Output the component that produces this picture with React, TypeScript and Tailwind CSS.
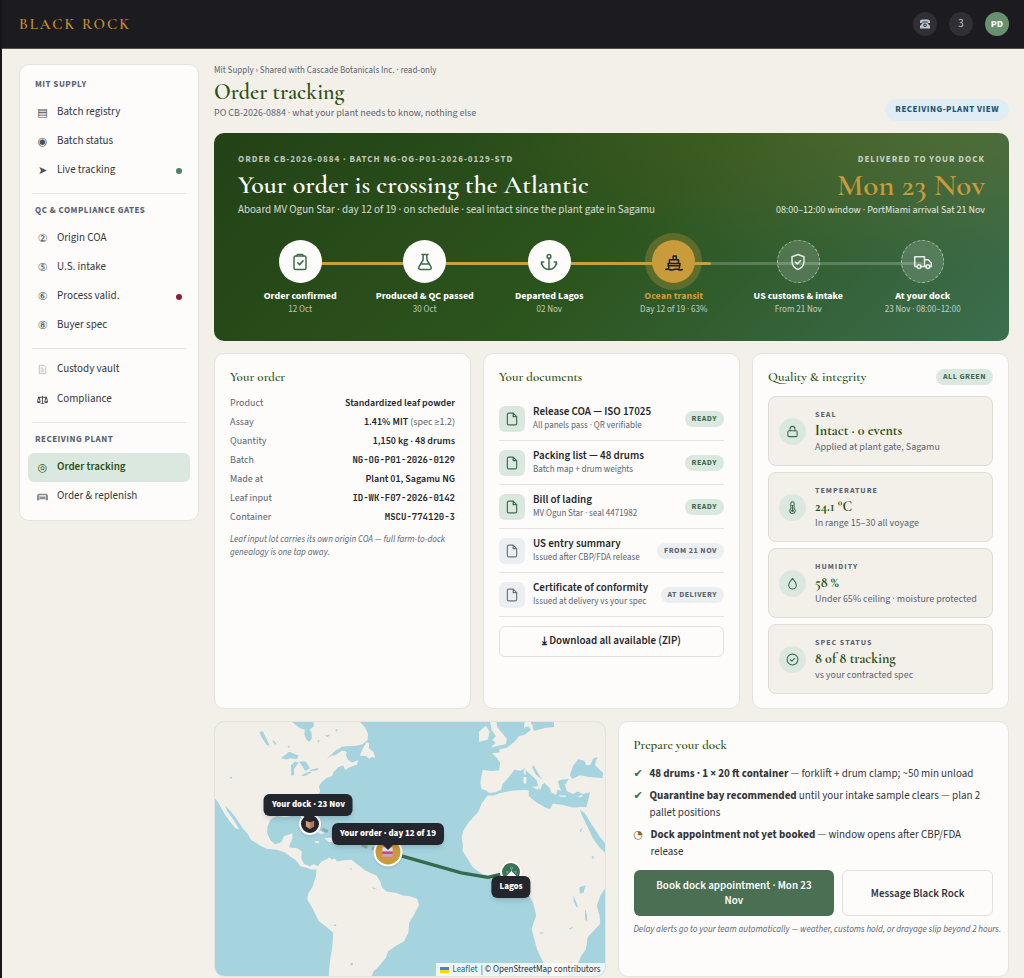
import React from "react";
import clsx from "clsx";


const SERIF = "font-['Cormorant_Garamond','Liberation_Serif',serif]";
const MONO = "font-['JetBrains_Mono','DejaVu_Sans_Mono',monospace]";
const SYMBOLS = "font-['DejaVu_Sans',sans-serif]";

interface INavItem {
    icon: React.ReactNode,
    label: string,
    dot?: string,
    active?: boolean,
    tall?: boolean,
}

interface INavGroup {
    title?: string,
    items: Array<INavItem>,
}

const vaultIcon = (
    <svg viewBox="0 0 12 12" className="size-[11px] text-[#b9bcc0]" fill="none" stroke="currentColor">
        <path d="M2.500 1.500h5l2 2v7h-7zM4 4.500h3M4 6.500h4M4 8.500h4" />
    </svg>
);

const scalesIcon = (
    <svg viewBox="0 0 12 12" className="size-[11px] text-[#4b4f55]" fill="currentColor">
        <path d="M1 3h4.500V2h1v1H11v1l1 4.500q0 1.500-2 1.500t-2-1.500L9 4H6.500v6H8v1H4v-1h1.500V4H3l1 4.500Q4 10 2 10T0 8.500L1 4zM2 5L1 8h2zM10 5L9 8h2z" />
    </svg>
);

const carIcon = (
    <svg viewBox="0 0 12 12" className="size-[11px] text-[#8a8d92]" fill="currentColor">
        <path fillRule="evenodd" d="M2 3h8q1.500 0 2 2.500V10h-2.500V9h-7v1H0V5.500Q.5 3 2 3zM2.500 4.500L2 6h8l-.5-1.500zM2 7v1h1.500V7zM8.500 7v1H10V7z" />
    </svg>
);

const navGroups: Array<INavGroup> = [
    {
        title: 'MIT SUPPLY',
        items: [
            { icon: '▤', label: 'Batch registry' },
            { icon: '◉', label: 'Batch status' },
            { icon: '➤', label: 'Live tracking', dot: 'bg-[#4f8060]' },
        ],
    },
    {
        title: 'QC & COMPLIANCE GATES',
        items: [
            { icon: '②', label: 'Origin COA' },
            { icon: '⑤', label: 'U.S. intake' },
            { icon: '⑥', label: 'Process valid.', dot: 'bg-[#8b1e3a]' },
            { icon: '⑧', label: 'Buyer spec' },
        ],
    },
    {
        items: [
            { icon: vaultIcon, label: 'Custody vault', tall: true },
            { icon: scalesIcon, label: 'Compliance', tall: true },
        ],
    },
    {
        title: 'RECEIVING PLANT',
        items: [
            { icon: '◎', label: 'Order tracking', active: true },
            { icon: carIcon, label: 'Order & replenish' },
        ],
    },
];

const iconPaths = {
    clipboard: <><rect x="4" y="4" width="16" height="18" rx="2" /><path d="M8 4V3q0-1 1-1h6q1 0 1 1v1M9 13l2.500 2.500 4.500-5" /></>,
    flask: <path d="M8 2h8M9.500 2v7L4 18.500Q3 22 6 22h12q3 0 2-3.500L14.500 9V2M7 14.500h10" />,
    anchor: <><circle cx="12" cy="4.500" r="2.500" /><path d="M12 7v15M2 15v-3h3M2 12.500C3 18.500 7 22 12 22s9-3.500 10-9.500M22 15v-3h-3" /></>,
    ship: <path d="M5 20l-1-6h16l-1 6M6 14V9h12v5M11 9V4h4v5M4 17h16M1 22q2.500-1.500 5 0t6 0 6 0 5 0" />,
    shield: <path d="M12 2l8 3v6c0 5.500-3.500 9-8 11-4.500-2-8-5.500-8-11V5zM8.500 12l2.500 2.500 4.500-4.500" />,
    truck: <><path d="M4 18H1V5h13v13H9.500M14 9h5l4 4.500V18h-2M14 18h2" /><circle cx="6.750" cy="18" r="2.500" /><circle cx="18.500" cy="18" r="2.500" /></>,
    file: <path d="M14 2H6.500Q4 2 4 4.500v15Q4 22 6.500 22h11q2.500 0 2.500-2.500V8zM14 2v6h6" />,
    lock: <><rect x="3.500" y="10.500" width="17" height="11" rx="2" /><path d="M7.500 10.500V7a4.500 4.500 0 0 1 9 0v3.500" /></>,
    thermometer: <><path d="M9 14V4.500a3 3 0 0 1 6 0V14a5 5 0 1 1-6 0z" /><path d="M12 8v10" /><circle cx="12" cy="18" r="1.500" /></>,
    drop: <path d="M12 2.500C8.500 6.500 5 10.500 5 15a7 7 0 0 0 14 0c0-4.500-3.500-8.500-7-12.500z" />,
    check: <><circle cx="12" cy="12" r="10" /><path d="M8 12.500l2.800 2.500 5-5" /></>,
};

type IconName = keyof typeof iconPaths;

const steps: Array<{ icon: IconName, title: string, when: string, state: 'done' | 'now' | 'next' }> = [
    { icon: 'clipboard', title: 'Order confirmed', when: '12 Oct', state: 'done' },
    { icon: 'flask', title: 'Produced & QC passed', when: '30 Oct', state: 'done' },
    { icon: 'anchor', title: 'Departed Lagos', when: '02 Nov', state: 'done' },
    { icon: 'ship', title: 'Ocean transit', when: 'Day 12 of 19 · 63%', state: 'now' },
    { icon: 'shield', title: 'US customs & intake', when: 'From 21 Nov', state: 'next' },
    { icon: 'truck', title: 'At your dock', when: '23 Nov · 08:00–12:00', state: 'next' },
];

const orderRows: Array<{ label: string, value: string, note?: string, mono?: boolean }> = [
    { label: 'Product', value: 'Standardized leaf powder' },
    { label: 'Assay', value: '1.41% MIT', note: '(spec ≥1.2)' },
    { label: 'Quantity', value: '1,150 kg · 48 drums' },
    { label: 'Batch', value: 'NG-OG-P01-2026-0129', mono: true },
    { label: 'Made at', value: 'Plant 01, Sagamu NG' },
    { label: 'Leaf input', value: 'ID-WK-F07-2026-0142', mono: true },
    { label: 'Container', value: 'MSCU-774120-3', mono: true },
];

const documents = [
    { title: 'Release COA — ISO 17025', sub: 'All panels pass · QR verifiable', status: 'READY', ready: true },
    { title: 'Packing list — 48 drums', sub: 'Batch map + drum weights', status: 'READY', ready: true },
    { title: 'Bill of lading', sub: 'MV Ogun Star · seal 4471982', status: 'READY', ready: true },
    { title: 'US entry summary', sub: 'Issued after CBP/FDA release', status: 'FROM 21 NOV', ready: false },
    { title: 'Certificate of conformity', sub: 'Issued at delivery vs your spec', status: 'AT DELIVERY', ready: false },
];

const readings: Array<{ icon: IconName, label: string, value: string, sub: string }> = [
    { icon: 'lock', label: 'SEAL', value: 'Intact · 0 events', sub: 'Applied at plant gate, Sagamu' },
    { icon: 'thermometer', label: 'TEMPERATURE', value: '24.1 °C', sub: 'In range 15–30 all voyage' },
    { icon: 'drop', label: 'HUMIDITY', value: '58 %', sub: 'Under 65% ceiling · moisture protected' },
    { icon: 'check', label: 'SPEC STATUS', value: '8 of 8 tracking', sub: 'vs your contracted spec' },
];

function Icon({ name, className }: { name: IconName, className?: string }) {
    return (
        <svg viewBox="0 0 24 24" className={clsx("shrink-0", className)} fill="none" stroke="currentColor" strokeWidth="2" strokeLinecap="round" strokeLinejoin="round" aria-hidden="true">
            {iconPaths[name]}
        </svg>
    )
}

function Card({ className, children }: { className?: string, children: React.ReactNode }) {
    return (
        <section className={clsx("bg-[#fdfcfa] border border-[#e3e3e0] rounded-[10px] px-[15px] pt-[15px] pb-[14px]", className)}>
            {children}
        </section>
    )
}

function CardTitle({ children }: { children: React.ReactNode }) {
    return <h2 className={clsx(SERIF, "text-[13px] leading-4 font-semibold text-[#2d5016]")}>{children}</h2>
}

function Badge({ ready, children }: { ready: boolean, children: React.ReactNode }) {
    return (
        <span className={clsx("shrink-0 rounded-full px-[7px] h-4 text-[8px] leading-4 font-bold tracking-[0.5px]", ready ? "bg-[#dbe8df] text-[#3f6b4d]" : "bg-[#eceff2] text-[#5b6472]")}>
            {children}
        </span>
    )
}

function Header() {
    return (
        <header className="flex items-center justify-between h-[49px] pl-[17px] pr-[15px] bg-[#1c1b20] border-b border-[#55504e]">
            <a href="#" className={clsx(SERIF, "text-[15px] leading-5 font-semibold tracking-[2px] text-[#c08f35]")}>BLACK ROCK</a>
            <div className="flex gap-3">
                <button aria-label="Contact" className="size-6 rounded-full bg-[#302f34] text-[#bfc6d2] flex items-center justify-center">
                    <svg viewBox="0 0 12 12" className="size-3" fill="currentColor">
                        <path d="M1 5V3.500Q1 1.500 3.500 1.500h5Q11 1.500 11 3.500V5H8.500V3.500h-5V5z" />
                        <path fillRule="evenodd" d="M4 4.500h4l3 3.500v2.500H1V8zM6 5.500a1.800 1.800 0 1 0 0 3.600 1.800 1.800 0 0 0 0-3.600zM6 6.500a.8.8 0 1 1 0 1.600.8.8 0 0 1 0-1.600z" />
                    </svg>
                </button>
                <button aria-label="Notifications" className="size-6 rounded-full bg-[#302f34] text-[#bfc6d2] text-[11px]">3</button>
                <button aria-label="Account" className="size-6 rounded-full bg-[#67906f] text-white text-[10px] font-bold">PD</button>
            </div>
        </header>
    )
}

function Sidebar() {
    return (
        <nav className="w-[180px] shrink-0 bg-[#fdfcfa] border border-[#e3e3e0] rounded-[10px] px-2 pt-2 pb-[9px]">
            {navGroups.map((group, i) => (
                <div key={i} className={clsx(i > 0 && "mt-2")}>
                    {i > 0 && <hr className="mx-1 mb-[5px] border-[#e3e3e0]" />}
                    {group.title && <h3 className="px-[7px] h-[25px] leading-[24px] text-[9px] font-bold tracking-[0.5px] text-[#5b6472]">{group.title}</h3>}
                    <ul>
                        {group.items.map((item) => (
                            <li key={item.label}>
                                <a
                                    href="#"
                                    className={clsx(
                                        "flex items-center gap-2 px-2 rounded-md text-[11px]",
                                        item.tall ? "h-[30px]" : "h-[29px]",
                                        item.active ? "bg-[#dbe8df] text-[#2d5016] font-semibold" : "text-[#33363b]"
                                    )}
                                >
                                    <span className={clsx(SYMBOLS, "w-[13px] flex justify-center text-[11px] leading-3 font-normal", item.active ? "text-[#2d5016]" : "text-[#4b4f55]")}>{item.icon}</span>
                                    <span className="flex-1">{item.label}</span>
                                    {item.dot && <span className={clsx("size-[6px] rounded-full", item.dot)} />}
                                </a>
                            </li>
                        ))}
                    </ul>
                </div>
            ))}
        </nav>
    )
}

function Hero() {
    return (
        <section className="h-52 rounded-[10px] px-6 pt-[21px] text-white bg-[radial-gradient(ellipse_at_90%_-10%,rgba(201,155,58,0.2),transparent_48%),linear-gradient(135deg,#234216_0%,#2c541d_50%,#3c6e4f_100%)]">
            <div className="flex justify-between">
                <div>
                    <p className="text-[9px] leading-3 font-bold tracking-[1px] text-white/70">ORDER CB-2026-0884 · BATCH NG-OG-P01-2026-0129-STD</p>
                    <h2 className={clsx(SERIF, "mt-[3px] text-[26px] leading-8 font-semibold")}>Your order is crossing the Atlantic</h2>
                    <p className="mt-px text-[11px] leading-4 text-white/80">Aboard MV Ogun Star · day 12 of 19 · on schedule · seal intact since the plant gate in Sagamu</p>
                </div>
                <div className="text-right">
                    <p className="text-[9px] leading-3 font-bold tracking-[1px] text-white/70">DELIVERED TO YOUR DOCK</p>
                    <p className={clsx(SERIF, "mt-[3px] text-[31px] leading-8 font-semibold text-[#c99b3a]")}>Mon 23 Nov</p>
                    <p className="mt-px text-[10px] leading-4 text-white/85">08:00–12:00 window · PortMiami arrival Sat 21 Nov</p>
                </div>
            </div>
            <div className="relative mt-[22px]">
                <div className="absolute top-[22px] left-[8.33%] right-[8.33%] h-[3px] rounded-full bg-white/20">
                    <div className="h-full w-[66%] rounded-full bg-[#c4a040]" />
                </div>
                <ol className="relative grid grid-cols-6 text-center">
                    {steps.map((step) => (
                        <li key={step.title} className="flex flex-col items-center">
                            <span
                                className={clsx(
                                    "size-[43px] rounded-full flex items-center justify-center",
                                    step.state === 'done' && "bg-[#fdfcfa] text-[#3f6b4d]",
                                    step.state === 'now' && "bg-[#c99b3a] text-[#1c1b20] ring-[7px] ring-[#c99b3a]/30",
                                    step.state === 'next' && "bg-white/15 text-white/85 border border-dashed border-white/50"
                                )}
                            >
                                <Icon name={step.icon} className="size-[18px]" />
                            </span>
                            <span className={clsx("mt-[6px] text-[10px] leading-[14px] font-bold", step.state === 'now' && "text-[#c99b3a]")}>{step.title}</span>
                            <span className="text-[9px] leading-[14px] text-white/70">{step.when}</span>
                        </li>
                    ))}
                </ol>
            </div>
        </section>
    )
}

function OrderCard() {
    return (
        <Card>
            <CardTitle>Your order</CardTitle>
            <dl className="mt-[9px] text-[10px] leading-[19px]">
                {orderRows.map((row) => (
                    <div key={row.label} className="flex justify-between">
                        <dt className="text-[#5b6472]">{row.label}</dt>
                        <dd className={clsx("text-[#24272c]", row.mono ? [MONO, "text-[9px] font-bold"] : "font-semibold")}>
                            {row.value}
                            {row.note && <span className="font-normal text-[#5b6472]"> {row.note}</span>}
                        </dd>
                    </div>
                ))}
            </dl>
            <p className="mt-[6px] text-[9px] leading-[13px] italic text-[#5b6472]">Leaf input lot carries its own origin COA — full farm-to-dock genealogy is one tap away.</p>
        </Card>
    )
}

function DocumentsCard() {
    return (
        <Card>
            <CardTitle>Your documents</CardTitle>
            <ul className="mt-3">
                {documents.map((doc) => (
                    <li key={doc.title} className="flex items-center h-11 border-b border-[#e3e3e0]">
                        <span className={clsx("size-[26px] shrink-0 rounded-md flex items-center justify-center", doc.ready ? "bg-[#dbe8df] text-[#3f6b4d]" : "bg-[#eceff2] text-[#6b7280]")}>
                            <Icon name="file" className="size-[14px]" />
                        </span>
                        <div className="ml-2 flex-1 whitespace-nowrap">
                            <p className="text-[11px] leading-[15px] font-semibold text-[#24272c]">{doc.title}</p>
                            <p className="text-[9px] leading-[14px] text-[#5b6472]">{doc.sub}</p>
                        </div>
                        <Badge ready={doc.ready}>{doc.status}</Badge>
                    </li>
                ))}
            </ul>
            <button className="mt-[9px] w-full h-[31px] rounded-md border border-[#e0e0de] text-[11px] font-semibold text-[#24272c]">⤓ Download all available (ZIP)</button>
        </Card>
    )
}

function QualityCard() {
    return (
        <Card>
            <div className="flex items-center justify-between">
                <CardTitle>Quality &amp; integrity</CardTitle>
                <Badge ready={true}>ALL GREEN</Badge>
            </div>
            <ul className="mt-[11px] flex flex-col gap-[6px]">
                {readings.map((r) => (
                    <li key={r.label} className="flex items-center gap-[9px] h-[70px] px-[10px] rounded-lg bg-[#f3f0ea] border border-[#dedcd5]">
                        <span className="size-[27px] shrink-0 rounded-full bg-[#dbe8df] text-[#3f6b4d] flex items-center justify-center">
                            <Icon name={r.icon} className="size-[13px]" />
                        </span>
                        <div className="whitespace-nowrap">
                            <p className="text-[8px] leading-4 font-bold tracking-[1px] text-[#5b6472]">{r.label}</p>
                            <p className={clsx(SERIF, "text-[14px] leading-4 font-bold text-[#2d5016]")}>{r.value}</p>
                            <p className="text-[10px] leading-4 text-[#5b6472]">{r.sub}</p>
                        </div>
                    </li>
                ))}
            </ul>
        </Card>
    )
}

// Atlantic coastlines, 3 units to a pixel
function WorldMap() {
    return (
        <svg viewBox="15 18 1170 765" preserveAspectRatio="xMidYMid slice" className="absolute inset-0 size-full" aria-hidden="true">
            <rect x="-500" y="-500" width="2500" height="2000" fill="#a5d3de" />
            <g fill="#f2efe9">
                <path d="M10 10H245V18L255 26 270 38 285 42 283 54 290 72 298 79 306 68 305 50 299 42 312 32 310 10H450V18L465 35 475 55 473 72 458 86 440 90 410 92 395 98 380 102 365 116 350 130 368 118 380 112 398 104 411 108 408 120 415 133 428 141 445 133 442 147 420 155 406 163 400 150 385 155 371 170 366 181 350 188 335 200 327 213 331 228 322 242 302 257 291 270 287 288 293 305 288 322 280 318 272 302 260 298 240 302 225 305 200 301 182 312 172 335 172 355 182 375 195 386 214 380 222 362 247 354 248 368 240 385 238 396 262 398 276 408 274 430 282 445 300 452 312 446 324 452 335 437 350 432 358 425 365 432 375 430 382 437 405 434 425 433 440 445 468 466 500 480 512 500 516 515 530 528 560 533 580 540 598 542 622 550 628 568 613 598 598 622 596 652 582 678 560 690 535 708 528 728 508 752 490 770 480 800H355L360 740 368 690 370 652 350 635 326 617 310 582 292 552 295 535 309 512 318 482 320 462 305 462 290 457 272 452 258 434 240 422 225 411 200 403 170 400 150 390 122 372 115 358 98 338 80 310 62 287 45 270 52 287 66 307 78 325 88 342 76 338 60 318 47 300 36 282 22 256 10 245Z" />
                <path d="M450 120L458 100 471 78 478 84 477 98 492 110 496 127 486 124 478 130 470 122ZM268 347L285 338 305 341 330 345 345 354 332 355 308 345 285 344ZM343 368L362 366 378 378 358 380ZM314 377L328 377 326 383 316 382ZM386 378H396V382H386Z" />
                <g transform="translate(570 0)">
                    <path d="M268 232L259 224 246 221 242 202 249 163 275 166 298 165 302 142 290 125 277 113 300 111 300 101 322 96 343 80 358 62 375 57 394 42 386 32 373 36 376 10H389L397 28 403 46 425 40 440 36 464 34 462 10H700V500L616 520 603 540 592 570 600 600 603 624 565 665 560 700 545 722 535 745 510 770 480 790H455L436 752 412 702 396 640 410 600 400 560 382 530 372 502 350 492 340 478 300 472 265 480 246 475 220 456 205 432 188 405 190 390 186 365 191 345 207 320 235 290 246 264 264 240 282 240 302 232 340 225 376 223 387 224 388 242 410 260 440 277 452 280 460 264 490 268 520 276 545 274 560 275 566 255 571 230 550 235 535 228 520 235 502 226 496 208 508 190 488 192 475 196 480 215 486 226 474 222 469 238 456 231 449 215 435 203 415 172 402 148 398 156 410 178 438 200 428 207 421 225 410 192 388 173 375 158 362 166 345 162 337 172 322 192 308 207 305 222 288 230Z" />
                    <path d="M270 10H290V18L293 35 310 55 322 70 318 86 292 91 272 96 288 82 278 72 289 62 276 44ZM238 48L258 30 270 48 264 72 238 78ZM373 160L379 162 378 178 372 174ZM371 185L381 184 380 204 372 204ZM397 214L420 211 415 223ZM478 239L500 240 498 244 480 243ZM534 243L550 237 545 246ZM388 30L400 28 396 40Z" />
                </g>
            </g>
            <g fill="#a5d3de">
                <path d="M213 128L238 108 266 120 262 130 240 128 230 132ZM244 180L243 150 255 138 266 141 253 160 252 180ZM268 138L288 138 300 158 286 166 276 150ZM272 180L298 168 306 170 285 181ZM300 163L325 157 324 164 303 166ZM148 50L158 46 170 70 180 90 170 88 156 66ZM185 72L200 82 196 88ZM365 120L395 93 430 92 448 100 440 128 425 120 412 108 398 104 375 120Z" />
                <g transform="translate(570 0)">
                    <path d="M511 178L521 150 536 131 555 136 560 149 572 148 582 128 594 124 586 148 611 172 609 187 570 184 540 179 518 190ZM541 282L556 293 575 325 600 362 630 400V425L600 396 580 368 562 330 546 296ZM540 515L558 510 552 532 541 534ZM522 540L528 555 536 576 530 574 522 556ZM556 580L562 596 563 618 557 612Z" />
                    <path d="M576 424L584 420 580 432ZM540 345L550 335 544 350ZM420 651H432V654H420ZM508 640L522 632 514 642Z" />
                    <path d="M605 538L640 505V800H540L560 700 565 667 603 626Z" />
                </g>
                <path d="M345 60L362 56 354 64ZM375 42L384 40 380 48ZM322 75L330 73 326 82ZM420 458H426V463H420ZM422 743H429V750H422ZM372 627H379V632H372ZM232 92L240 90 237 98ZM60 184H66V189H60ZM485 515L505 522 490 520Z" />
            </g>
            <path d="M535 410L475 396 400 370 300 323" fill="none" stroke="#8a958f" strokeWidth="9" strokeDasharray="18 14" opacity=".7" />
            <path d="M535 410L755 472 835 486 907 469" fill="none" stroke="#356b4b" strokeWidth="10" strokeLinejoin="round" />
        </svg>
    )
}

function MapCard() {
    return (
        <section className="relative h-64 overflow-hidden rounded-[10px] border border-[#e3e3e0]">
            <WorldMap />
            <span className="absolute left-[24.4%] top-[40%] -translate-1/2 size-[22px] rounded-full border-2 border-white bg-[#24262d] shadow flex items-center justify-center">
                <svg viewBox="0 0 12 12" className="size-[10px]"><path d="M1 2l5 2v8L1 9z" fill="#d09a78" /><path d="M11 2L6 4v8l5-3z" fill="#b87858" /></svg>
            </span>
            <span className="absolute left-[44.4%] top-[51%] -translate-1/2 size-[29px] rounded-full border-2 border-white bg-[#c99b3a] shadow flex items-center justify-center">
                <svg viewBox="0 0 14 14" className="size-3"><path d="M1 2h12v5H1z" fill="#e8dcee" /><path d="M1 7h12v3H1z" fill="#e0417c" /><path d="M1 10h12v3H1z" fill="#c7a2c9" /></svg>
            </span>
            <span className="absolute left-[76%] top-[59%] -translate-1/2 size-[22px] rounded-full border-2 border-white bg-[#41704f] shadow flex items-center justify-center">
                <Icon name="anchor" className="size-[11px] text-[#35b5d0]" />
            </span>
            <span className="absolute left-[24%] top-[32.5%] -translate-1/2 h-[22px] px-2 rounded-md bg-[#24262d] text-white text-[9px] leading-[22px] font-extrabold whitespace-nowrap shadow-md after:absolute after:top-full after:left-1/2 after:-translate-x-1/2 after:border-[5px] after:border-transparent after:border-t-[#24262d]">Your dock · 23 Nov</span>
            <span className="absolute left-[44.4%] top-[44%] -translate-1/2 h-[22px] px-2 rounded-md bg-[#24262d] text-white text-[9px] leading-[22px] font-extrabold whitespace-nowrap shadow-md after:absolute after:top-full after:left-1/2 after:-translate-x-1/2 after:border-[5px] after:border-transparent after:border-t-[#24262d]">Your order · day 12 of 19</span>
            <span className="absolute left-[76%] top-[65%] -translate-1/2 h-[22px] px-2 rounded-md bg-[#24262d] text-white text-[9px] leading-[22px] font-extrabold whitespace-nowrap shadow-md after:absolute after:bottom-full after:left-1/2 after:-translate-x-1/2 after:border-[5px] after:border-transparent after:border-b-white">Lagos</span>
            <p className="absolute right-0 bottom-0 flex items-center gap-[3px] h-[13px] px-1 bg-white/80 text-[9px] leading-[13px] text-[#333333] whitespace-nowrap">
                <svg viewBox="0 0 9 6" className="w-[9px] h-[6px]"><path d="M0 0h9v3H0z" fill="#4c7be1" /><path d="M0 3h9v3H0z" fill="#ffd500" /></svg>
                <a href="#" className="text-[#0078a8]">Leaflet</a>
                <span>| © OpenStreetMap contributors</span>
            </p>
        </section>
    )
}

function DockCard() {
    return (
        <Card>
            <CardTitle>Prepare your dock</CardTitle>
            <ul className="mt-3 flex flex-col gap-[5px] text-[11px] leading-[17px] text-[#33363b]">
                <li className="flex gap-[7px]">
                    <span className={clsx(SYMBOLS, "w-[9px] text-[11px] text-[#3f6b4d]")}>✔</span>
                    <p className="flex-1"><b>48 drums · 1 × 20 ft container</b> — forklift + drum clamp; ~50 min unload</p>
                </li>
                <li className="flex gap-[7px]">
                    <span className={clsx(SYMBOLS, "w-[9px] text-[11px] text-[#3f6b4d]")}>✔</span>
                    <p className="flex-1"><b>Quarantine bay recommended</b> until your intake sample clears — plan 2 pallet positions</p>
                </li>
                <li className="flex gap-2">
                    <span className={clsx(SYMBOLS, "w-[9px] text-[11px] text-[#8a6414]")}>◔</span>
                    <p className="flex-1"><b>Dock appointment not yet booked</b> — window opens after CBP/FDA release</p>
                </li>
            </ul>
            <div className="mt-[10px] grid grid-cols-[4fr_3fr] gap-2 text-[11px] leading-[15px] font-semibold">
                <button className="h-[46px] px-5 rounded-md bg-[#4a6f53] text-white">Book dock appointment · Mon 23 Nov</button>
                <button className="h-[46px] px-4 rounded-md border border-[#e0e0de] text-[#33363b]">Message Black Rock</button>
            </div>
            <p className="mt-[7px] text-[9px] leading-[13px] italic whitespace-nowrap text-[#5b6472]">Delay alerts go to your team automatically — weather, customs hold, or drayage slip beyond 2 hours.</p>
        </Card>
    )
}

export default function App() {
    return (
        <div className="min-h-screen border-l-2 border-[#151517] bg-[#f3f0ea] font-['Source_Sans_3','Source_Sans_Pro','Noto_Sans_CJK_JP','DejaVu_Sans',sans-serif] text-[#33363b]">
            <Header />
            <div className="flex items-start gap-[15px] pl-[17px] pr-[15px] pt-[15px]">
                <Sidebar />
                <main className="flex-1 min-w-0 flex flex-col gap-3">
                    <div className="flex items-end justify-between">
                        <div className="pb-[2px]">
                            <p className="text-[9px] leading-[13px] text-[#5b6472]">Mit Supply › Shared with Cascade Botanicals Inc. · read-only</p>
                            <h1 className={clsx(SERIF, "text-[22px] leading-[30px] font-semibold text-[#2d5016]")}>Order tracking</h1>
                            <p className="text-[10px] leading-3 text-[#5b6472]">PO CB-2026-0884 · what your plant needs to know, nothing else</p>
                        </div>
                        <span className="h-[22px] px-[10px] rounded-full bg-[#e1edf5] text-[9px] leading-[22px] font-bold tracking-[0.5px] text-[#1c5470]">RECEIVING-PLANT VIEW</span>
                    </div>
                    <Hero />
                    <div className="grid grid-cols-3 gap-3">
                        <OrderCard />
                        <DocumentsCard />
                        <QualityCard />
                    </div>
                    <div className="grid grid-cols-2 gap-3">
                        <MapCard />
                        <DockCard />
                    </div>
                </main>
            </div>
        </div>
    )
}
